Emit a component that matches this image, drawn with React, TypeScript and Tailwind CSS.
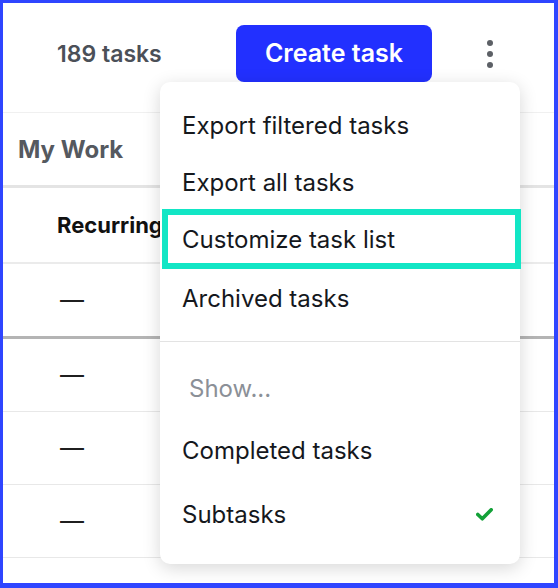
import React from "react";

const font = { fontFamily: "Inter, 'Noto Sans', sans-serif" };

function Dash() {
  return <span className="text-[24px] text-[#1f1f1f] leading-none">—</span>;
}

export default function App() {
  return (
    <div
      className="relative w-[558px] h-[588px] overflow-hidden bg-white border-[#2f45ff] border-l-[3px] border-t-[3px] border-r-[4px] border-b-[5px]"
      style={font}
    >
      {/* Header */}
      <div className="h-[109px] pt-[22px]">
        <div className="flex items-center h-[57px]">
          <div className="w-[233px] pl-[54px] pt-[1px] text-[23px] font-semibold text-[#4b5058]">189 tasks</div>
          <div className="w-[196px] h-[57px] pt-[1px] rounded-[8px] bg-[#2230ff] flex items-center justify-center text-white text-[25px] font-semibold">
            Create task
          </div>
          <div className="ml-[55px] flex flex-col gap-[5px]">
            <span className="block w-[6px] h-[6px] rounded-full bg-[#5c6066]" />
            <span className="block w-[6px] h-[6px] rounded-full bg-[#5c6066]" />
            <span className="block w-[6px] h-[6px] rounded-full bg-[#5c6066]" />
          </div>
        </div>
      </div>
      <div className="h-px bg-[#f0f0f0]" />
      {/* My Work */}
      <div className="h-[72px] flex items-center pl-[15px] pt-[2px] text-[24px] font-bold text-[#55595f]">My Work</div>
      <div className="h-[3px] bg-[#e4e4e4]" />
      {/* Column header */}
      <div className="h-[74px] flex items-center pl-[54px] pt-[1px] text-[22px] font-bold text-[#111]">Recurring</div>
      <div className="h-[2px] bg-[#ebebeb]" />
      <div className="h-[72px] flex items-center pl-[57px]">
        <Dash />
      </div>
      <div className="h-[3px] bg-[#b4b4b4]" />
      <div className="h-[72px] flex items-center pl-[57px]">
        <Dash />
      </div>
      <div className="h-px bg-[#e8e8e8]" />
      <div className="h-[72px] flex items-center pl-[57px]">
        <Dash />
      </div>
      <div className="h-px bg-[#e8e8e8]" />
      <div className="h-[72px] flex items-center pl-[57px]">
        <Dash />
      </div>
      <div className="h-px bg-[#e8e8e8]" />
      <div className="h-[40px]" />

      {/* Dropdown menu */}
      <div className="absolute left-[157px] top-[79px] w-[360px] h-[482px] bg-white rounded-[10px] shadow-[0_4px_18px_rgba(0,0,0,0.16)] pt-[15px] text-[24px] text-[#15181d]">
        <div className="h-[57px] flex items-center pl-[22px]">Export filtered tasks</div>
        <div className="h-[55px] flex items-center pl-[22px] pt-[2px]">Export all tasks</div>
        <div className="h-[60px] ml-[2px] -mr-[1px] border-[6px] border-[#12e6c5] flex items-center pl-[14px] pt-[2px]">
          Customize task list
        </div>
        <div className="h-[58px] flex items-center pl-[22px] pt-[1px]">Archived tasks</div>
        <div className="mt-[14px] h-px bg-[#e3e3e3]" />
        <div className="mt-[15px] h-[62px] flex items-center pl-[29px] pt-[2px] text-[#8b9097]">Show...</div>
        <div className="h-[62px] flex items-center pl-[22px] pt-[2px]">Completed tasks</div>
        <div className="h-[64px] flex items-center pl-[22px] pt-[3px]">
          <span>Subtasks</span>
          <svg className="ml-auto mr-[27px]" width="17" height="13" viewBox="0 0 17 13">
            <path d="M1.8 6.5 L6.3 10.8 L15.2 1.8" fill="none" stroke="#13a138" strokeWidth="3.6" strokeLinecap="round" strokeLinejoin="round" />
          </svg>
        </div>
      </div>
    </div>
  );
}
